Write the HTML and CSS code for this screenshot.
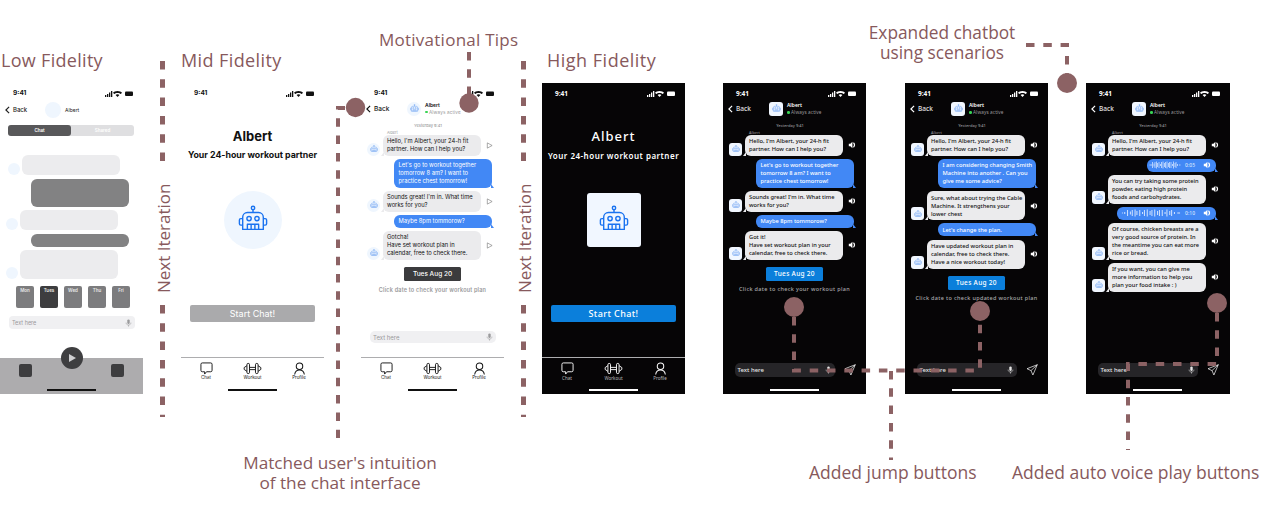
FILE: index.html
```html
<!DOCTYPE html>
<html lang="en">
<head>
<meta charset="utf-8">
<title>Albert chatbot design iterations</title>
<link rel="stylesheet" href="styles.css">
</head>
<body>
<svg class="defs" width="0" height="0" aria-hidden="true">
  <symbol id="robot" viewBox="0 0 32 32">
    <g fill="none" stroke="currentColor" stroke-width="1.5" stroke-linejoin="round">
      <circle cx="16" cy="3.2" r="1.8"/><path d="M16 5v3"/>
      <path d="M10 8h12a5 5 0 0 1 5 5v13H5V13a5 5 0 0 1 5-5z"/>
      <circle cx="11.8" cy="14.5" r="2.3"/><circle cx="20.2" cy="14.5" r="2.3"/>
      <path d="M10 26v-5.500h12V26M14 20.500V26M18 20.500V26"/>
      <path d="M5 14.500H3a1.500 1.500 0 0 0-1.500 1.500v4A1.500 1.500 0 0 0 3 21.500h2M27 14.500h2a1.500 1.500 0 0 1 1.500 1.500v4a1.500 1.500 0 0 1-1.500 1.500h-2"/>
    </g>
  </symbol>
  <symbol id="status" viewBox="0 0 28 7">
    <path fill="currentColor" d="M0 5h1.300v2H0zM2 4h1.300v3H2zM4 2.500h1.300V7H4zM6 1h1.300v6H6z"/>
    <path fill="currentColor" d="M12.500 1C14.500 1 16 1.800 17 2.800L15.800 4C15 3.300 14 2.900 12.500 2.900S10 3.300 9.200 4L8 2.800C9 1.800 10.500 1 12.500 1zM12.500 4.200c.8 0 1.400.3 1.900.7L12.500 7l-1.900-2.100c.5-.4 1.100-.7 1.900-.7z"/>
    <rect fill="currentColor" x="20" y="1.500" width="8" height="4.500" rx="1"/>
  </symbol>
  <symbol id="chat" viewBox="0 0 14 14">
    <path fill="none" stroke="currentColor" stroke-width="1" stroke-linejoin="round" d="M2.500 1h9A1.500 1.500 0 0 1 13 2.500v6.500A1.500 1.500 0 0 1 11.500 10.500H7L5 13V10.500H2.500A1.500 1.500 0 0 1 1 9V2.500A1.500 1.500 0 0 1 2.500 1z"/>
  </symbol>
  <symbol id="dumbbell" viewBox="0 0 20 14">
    <g fill="none" stroke="currentColor" stroke-width="1" stroke-linejoin="round">
      <rect x="4" y="1.500" width="2.800" height="11" rx="1.400"/><rect x="13.200" y="1.500" width="2.800" height="11" rx="1.400"/>
      <path d="M4 4 1 6v2l3 2M16 4l3 2v2l-3 2M6.800 5.800h6.400M6.800 8.200h6.400"/>
    </g>
  </symbol>
  <symbol id="person" viewBox="0 0 14 14">
    <g fill="none" stroke="currentColor" stroke-width="1.100">
      <circle cx="7" cy="4.500" r="3.500"/><path d="M1.800 13.500c.4-3 2-5 5.200-5s4.800 2 5.200 5"/>
    </g>
  </symbol>
  <symbol id="speaker" viewBox="0 0 10 10">
    <path fill="currentColor" d="M1 3.500h2L5.500 1v8L3 6.500H1z"/>
    <path fill="none" stroke="currentColor" stroke-width="1.400" d="M6.800 2.200c1.600 1.600 1.600 4 0 5.600"/>
  </symbol>
  <symbol id="play-outline" viewBox="0 0 8 8">
    <path fill="none" stroke="currentColor" stroke-width=".7" d="M1.500 1v6L7 4z"/>
  </symbol>
  <symbol id="mic" viewBox="0 0 8 10">
    <rect fill="currentColor" x="2.500" y=".5" width="3" height="5.800" rx="1.500"/>
    <path fill="none" stroke="currentColor" stroke-width=".7" d="M1 4.500c0 2 1.300 3 3 3s3-1 3-3M4 7.500v2"/>
  </symbol>
  <symbol id="send" viewBox="0 0 12 12">
    <path fill="none" stroke="currentColor" stroke-width=".7" stroke-linejoin="round" d="M11.300.7 1 4.700l4 1.900 1.900 4.400zM11.300.7 5 6.600"/>
  </symbol>
  <symbol id="chevron" viewBox="0 0 6 10">
    <path fill="none" stroke="currentColor" stroke-width="1.500" d="M5 1 1 5l4 4"/>
  </symbol>
  <symbol id="wave" viewBox="0 0 64 8" preserveAspectRatio="none">
    <path fill="none" stroke="currentColor" stroke-width="1" d="M1 4h1M4 3v2M7 1v6M10 2.500v3M12 1v6M15 .5v7M17 2v4M20 1v6M23 3v2M25 1v6M28 .5v7M31 2v4M33 1v6M36 .5v7M39 2v4M41 1v6M44 1v6M47 3v2M49 .5v7M52 2v4M54 1v6M57 3v2M60 4h3"/>
  </symbol>
</svg>

<main class="canvas">
  <h2 class="note note-low">Low Fidelity</h2>
  <h2 class="note note-mid">Mid Fidelity</h2>
  <h2 class="note note-high">High Fidelity</h2>
  <p class="note note-tips">Motivational Tips</p>
  <p class="note note-expanded">Expanded chatbot<br>using scenarios</p>
  <p class="note note-matched">Matched user's intuition<br>of the chat interface</p>
  <p class="note note-jump">Added jump buttons</p>
  <p class="note note-voice">Added auto voice play buttons</p>

  <!-- Low fidelity -->
  <section class="phone light p-low">
    <div class="status"><span>9:41</span><svg class="status-icons"><use href="#status"/></svg></div>
    <div class="low-header">
      <svg class="chevron"><use href="#chevron"/></svg><span class="back-label">Back</span>
      <span class="low-avatar"></span><span class="low-name">Albert</span>
    </div>
    <div class="segment"><span class="segment-on">Chat</span><span class="segment-off">Shared</span></div>
    <div class="low-msgs">
      <div class="low-row low-row-a"><span class="low-dot"></span><span class="low-bubble low-grey h20"></span></div>
      <div class="low-row low-row-user"><span class="low-bubble low-dark h28"></span></div>
      <div class="low-row low-row-b"><span class="low-dot"></span><span class="low-bubble low-grey h20"></span></div>
      <div class="low-row low-row-user"><span class="low-bubble low-dark h13"></span></div>
      <div class="low-row low-row-b"><span class="low-dot"></span><span class="low-bubble low-grey h29"></span></div>
    </div>
    <div class="days">
      <span class="day">Mon</span><span class="day day-on">Tues</span><span class="day">Wed</span><span class="day">Thu</span><span class="day">Fri</span>
    </div>
    <div class="low-input"><span>Text here</span><svg class="mic"><use href="#mic"/></svg></div>
    <div class="low-bar">
      <span class="low-square"></span>
      <span class="low-play"><span class="low-play-arrow"></span></span>
      <span class="low-square"></span>
    </div>
    <span class="home"></span>
  </section>

  <!-- Mid fidelity welcome -->
  <section class="phone light p-mid">
    <div class="status"><span>9:41</span><svg class="status-icons"><use href="#status"/></svg></div>
    <div class="welcome">
      <h3 class="welcome-title">Albert</h3>
      <p class="welcome-sub">Your 24-hour workout partner</p>
      <div class="welcome-circle"><svg class="robot-big"><use href="#robot"/></svg></div>
      <div class="start start-grey">Start Chat!</div>
    </div>
    <nav class="tabs">
      <div class="tab"><svg class="tab-icon"><use href="#chat"/></svg><span>Chat</span></div>
      <div class="tab"><svg class="tab-icon tab-wide"><use href="#dumbbell"/></svg><span>Workout</span></div>
      <div class="tab"><svg class="tab-icon"><use href="#person"/></svg><span>Profile</span></div>
    </nav>
    <span class="home"></span>
  </section>

  <!-- Mid fidelity chat -->
  <section class="phone light p-midchat">
    <div class="status"><span>9:41</span><svg class="status-icons"><use href="#status"/></svg></div>
    <header class="chat-head">
      <svg class="chevron"><use href="#chevron"/></svg><span class="back-label">Back</span>
      <span class="head-avatar round"><svg><use href="#robot"/></svg></span>
      <div class="head-text"><strong>Albert</strong><span><i class="online"></i>Always active</span></div>
    </header>
    <div class="stamp">Yesterday 9:41</div>
    <div class="sender">Albert</div>
    <div class="msgs">
      <div class="row"><span class="avatar round"><svg><use href="#robot"/></svg></span><p class="bubble bot">Hello, I'm Albert, your 24-h fit<br>partner. How can I help you?</p><svg class="play"><use href="#play-outline"/></svg></div>
      <p class="bubble user">Let's go to workout together<br>tomorrow 8 am? I want to<br>practice chest tomorrow!</p>
      <div class="row"><span class="avatar round"><svg><use href="#robot"/></svg></span><p class="bubble bot">Sounds great! I'm in. What time<br>works for you?</p><svg class="play"><use href="#play-outline"/></svg></div>
      <p class="bubble user">Maybe 8pm tommorow?</p>
      <div class="row"><span class="avatar round"><svg><use href="#robot"/></svg></span><p class="bubble bot">Gotcha!<br>Have set workout plan in<br>calendar, free to check there.</p><svg class="play"><use href="#play-outline"/></svg></div>
    </div>
    <div class="date date-dark">Tues Aug 20</div>
    <p class="hint">Click date to check your workout plan</p>
    <div class="input input-light"><span>Text here</span><svg class="mic"><use href="#mic"/></svg></div>
    <nav class="tabs">
      <div class="tab"><svg class="tab-icon"><use href="#chat"/></svg><span>Chat</span></div>
      <div class="tab"><svg class="tab-icon tab-wide"><use href="#dumbbell"/></svg><span>Workout</span></div>
      <div class="tab"><svg class="tab-icon"><use href="#person"/></svg><span>Profile</span></div>
    </nav>
    <span class="home"></span>
  </section>

  <!-- High fidelity welcome -->
  <section class="phone dark p-high">
    <div class="status"><span>9:41</span><svg class="status-icons"><use href="#status"/></svg></div>
    <div class="welcome">
      <h3 class="welcome-title">Albert</h3>
      <p class="welcome-sub">Your 24-hour workout partner</p>
      <div class="welcome-square"><svg class="robot-big"><use href="#robot"/></svg></div>
      <div class="start start-blue">Start Chat!</div>
    </div>
    <nav class="tabs">
      <div class="tab"><svg class="tab-icon"><use href="#chat"/></svg><span>Chat</span></div>
      <div class="tab"><svg class="tab-icon tab-wide"><use href="#dumbbell"/></svg><span>Workout</span></div>
      <div class="tab"><svg class="tab-icon"><use href="#person"/></svg><span>Profile</span></div>
    </nav>
    <span class="home"></span>
  </section>

  <!-- High fidelity chat 1 -->
  <section class="phone dark p-chat1">
    <div class="status"><span>9:41</span><svg class="status-icons"><use href="#status"/></svg></div>
    <header class="chat-head">
      <svg class="chevron"><use href="#chevron"/></svg><span class="back-label">Back</span>
      <span class="head-avatar"><svg><use href="#robot"/></svg></span>
      <div class="head-text"><strong>Albert</strong><span><i class="online"></i>Always active</span></div>
    </header>
    <div class="stamp">Yesterday 9:41</div>
    <div class="sender">Albert</div>
    <div class="msgs">
      <div class="row"><span class="avatar"><svg><use href="#robot"/></svg></span><p class="bubble bot">Hello, I'm Albert, your 24-h fit<br>partner. How can I help you?</p><svg class="speaker"><use href="#speaker"/></svg></div>
      <p class="bubble user">Let's go to workout together<br>tomorrow 8 am? I want to<br>practice chest tomorrow!</p>
      <div class="row"><span class="avatar"><svg><use href="#robot"/></svg></span><p class="bubble bot">Sounds great! I'm in. What time<br>works for you?</p><svg class="speaker"><use href="#speaker"/></svg></div>
      <p class="bubble user">Maybe 8pm tommorow?</p>
      <div class="row"><span class="avatar"><svg><use href="#robot"/></svg></span><p class="bubble bot">Got it!<br>Have set workout plan in your<br>calendar, free to check there.</p><svg class="speaker"><use href="#speaker"/></svg></div>
    </div>
    <div class="date date-blue">Tues Aug 20</div>
    <p class="hint">Click date to check your workout plan</p>
    <div class="compose"><div class="input input-dark"><span>Text here</span><svg class="mic"><use href="#mic"/></svg></div><svg class="send"><use href="#send"/></svg></div>
    <span class="home"></span>
  </section>

  <!-- High fidelity chat 2 -->
  <section class="phone dark p-chat2">
    <div class="status"><span>9:41</span><svg class="status-icons"><use href="#status"/></svg></div>
    <header class="chat-head">
      <svg class="chevron"><use href="#chevron"/></svg><span class="back-label">Back</span>
      <span class="head-avatar"><svg><use href="#robot"/></svg></span>
      <div class="head-text"><strong>Albert</strong><span><i class="online"></i>Always active</span></div>
    </header>
    <div class="stamp">Yesterday 9:41</div>
    <div class="sender">Albert</div>
    <div class="msgs msgs-wide">
      <div class="row"><span class="avatar"><svg><use href="#robot"/></svg></span><p class="bubble bot">Hello, I'm Albert, your 24-h fit<br>partner. How can I help you?</p><svg class="speaker"><use href="#speaker"/></svg></div>
      <p class="bubble user">I am considering changing Smith<br>Machine into another . Can you<br>give me some advice?</p>
      <div class="row"><span class="avatar"><svg><use href="#robot"/></svg></span><p class="bubble bot">Sure, what about trying the Cable<br>Machine. It strengthens your<br>lower chest</p><svg class="speaker"><use href="#speaker"/></svg></div>
      <p class="bubble user">Let's change the plan.</p>
      <div class="row"><span class="avatar"><svg><use href="#robot"/></svg></span><p class="bubble bot">Have updated workout plan in<br>calendar, free to check there.<br>Have a nice workout today!</p><svg class="speaker"><use href="#speaker"/></svg></div>
    </div>
    <div class="date date-blue">Tues Aug 20</div>
    <p class="hint">Click date to check updated workout plan</p>
    <div class="compose"><div class="input input-dark"><span>Text here</span><svg class="mic"><use href="#mic"/></svg></div><svg class="send"><use href="#send"/></svg></div>
    <span class="home"></span>
  </section>

  <!-- High fidelity chat 3 -->
  <section class="phone dark p-chat3">
    <div class="status"><span>9:41</span><svg class="status-icons"><use href="#status"/></svg></div>
    <header class="chat-head">
      <svg class="chevron"><use href="#chevron"/></svg><span class="back-label">Back</span>
      <span class="head-avatar"><svg><use href="#robot"/></svg></span>
      <div class="head-text"><strong>Albert</strong><span><i class="online"></i>Always active</span></div>
    </header>
    <div class="stamp">Yesterday 9:41</div>
    <div class="sender">Albert</div>
    <div class="msgs">
      <div class="row"><span class="avatar"><svg><use href="#robot"/></svg></span><p class="bubble bot">Hello, I'm Albert, your 24-h fit<br>partner. How can I help you?</p><svg class="speaker"><use href="#speaker"/></svg></div>
      <div class="bubble user voice voice-short"><svg class="wave wave-short"><use href="#wave"/></svg><span>0:05</span><svg class="voice-speaker"><use href="#speaker"/></svg></div>
      <div class="row"><span class="avatar"><svg><use href="#robot"/></svg></span><p class="bubble bot">You can try taking some protein<br>powder, eating high protein<br>foods and carbohydrates.</p><svg class="speaker"><use href="#speaker"/></svg></div>
      <div class="bubble user voice"><svg class="wave"><use href="#wave"/></svg><span>0:10</span><svg class="voice-speaker"><use href="#speaker"/></svg></div>
      <div class="row"><span class="avatar"><svg><use href="#robot"/></svg></span><p class="bubble bot">Of course, chicken breasts are a<br>very good source of protein. In<br>the meantime you can eat more<br>rice or bread.</p><svg class="speaker"><use href="#speaker"/></svg></div>
      <div class="row"><span class="avatar"><svg><use href="#robot"/></svg></span><p class="bubble bot">If you want, you can give me<br>more information to help you<br>plan your food intake : )</p><svg class="speaker"><use href="#speaker"/></svg></div>
    </div>
    <div class="compose"><div class="input input-dark"><span>Text here</span><svg class="mic"><use href="#mic"/></svg></div><svg class="send"><use href="#send"/></svg></div>
    <span class="home"></span>
  </section>

  <!-- Annotation overlay -->
  <svg class="overlay" width="1280" height="512" viewBox="0 0 1280 512" aria-hidden="true">
    <g class="dash-fat">
      <path d="M162.500 61V170M162.500 305V417"/>
      <path d="M523.500 61V170M523.500 305V417"/>
    </g>
    <g class="dash">
      <path d="M345 108H338V438"/>
      <path d="M469 52V95"/>
      <path d="M1026 45H1067V75"/>
      <path d="M794 317V370.500H980V320"/>
      <path d="M891 371V460"/>
      <path d="M1217 313V364H1128V450"/>
    </g>
    <g class="dots">
      <circle cx="355.500" cy="107.500" r="9.700"/>
      <circle cx="469" cy="103" r="9.700"/>
      <circle cx="1067" cy="83" r="10"/>
      <circle cx="794" cy="307" r="10"/>
      <circle cx="980" cy="311" r="10"/>
      <circle cx="1217" cy="303" r="10"/>
    </g>
  </svg>
  <span class="note iter iter-1">Next Iteration</span>
  <span class="note iter iter-2">Next Iteration</span>
</main>
</body>
</html>
```
FILE: styles.css
```css
* { box-sizing: border-box; margin: 0; padding: 0; }
html, body { background: #fff; }
body { width: 1280px; height: 512px; overflow: hidden; font-family: "Noto Sans", sans-serif; }
.defs { position: absolute; }
.canvas { position: relative; width: 1280px; height: 512px; overflow: hidden; }

/* Annotations */
.note { position: absolute; font-family: "Open Sans", "Noto Sans", sans-serif; font-weight: 400; font-size: 18px; line-height: 20px; color: #87595c; white-space: nowrap; z-index: 3; }
.note-low { left: 1px; top: 50px; letter-spacing: .3px; }
.note-mid { left: 181px; top: 50px; letter-spacing: .4px; }
.note-high { left: 547px; top: 50px; letter-spacing: .5px; }
.note-tips { left: 379px; top: 30px; font-size: 17px; letter-spacing: .25px; }
.note-expanded { left: 864px; top: 23px; width: 156px; text-align: center; font-size: 17.300px; }
.note-matched { left: 242px; top: 453px; width: 196px; text-align: center; font-size: 17.200px; }
.note-jump { left: 809px; top: 462px; font-size: 17.500px; }
.note-voice { left: 1012px; top: 462px; font-size: 17.500px; }
.iter { writing-mode: vertical-rl; transform: rotate(180deg); font-size: 17px; line-height: 20px; top: 183px; height: 110px; background: #fff; }
.iter-1 { left: 154px; }
.iter-2 { left: 515px; }
.overlay { position: absolute; left: 0; top: 0; z-index: 2; pointer-events: none; }
.dash-fat path { fill: none; stroke: #8c6264; stroke-width: 5; stroke-dasharray: 8.500 9.800; }
.dash path { fill: none; stroke: #8c6264; stroke-width: 4; stroke-dasharray: 8.500 8.800; }
.dots circle { fill: #8c6264; }

/* Phone frame */
.phone { position: absolute; top: 83px; width: 143px; height: 311px; display: flex; flex-direction: column; overflow: hidden; }
.p-low { left: 0; }
.p-mid { left: 181px; }
.p-midchat { left: 361px; }
.p-high { left: 542px; }
.p-chat1 { left: 723px; }
.p-chat2 { left: 905px; }
.p-chat3 { left: 1086px; width: 144px; }
.light { background: #fff; color: #111; --home: #111; --tabline: #adadaf; font-family: Inter, "Noto Sans", sans-serif; }
.dark { background: #060506; color: #fff; --home: #fff; --tabline: #adadaf; }
.status { flex: none; height: 20px; padding: 0 10px 0 13px; display: flex; align-items: center; justify-content: space-between; font-size: 6.500px; font-weight: 700; }
.status-icons { width: 28px; height: 7px; }
.home { position: absolute; left: 47px; bottom: 3.500px; width: 49px; height: 1.500px; background: var(--home); }

/* Low fidelity */
.low-header { flex: none; height: 13px; margin-left: 5px; display: flex; align-items: center; font-size: 5.500px; color: #222; }
.chevron { width: 5px; height: 8px; flex: none; }
.back-label { margin-left: 3px; width: 17px; font-size: 6px; font-weight: 500; }
.low-avatar { width: 16px; height: 16px; border-radius: 50%; background: #eff6fe; margin-left: 15px; flex: none; }
.low-name { margin-left: 4px; font-size: 5px; }
.segment { flex: none; display: flex; height: 11px; margin: 9px 9px 0 8px; border-radius: 3px; background: #dfdfe1; color: #fff; font-size: 4.500px; font-weight: 600; text-align: center; line-height: 11px; }
.segment-on { flex: 63; background: #58585a; border-radius: 3px; }
.segment-off { flex: 63; }
.low-msgs { flex: none; display: flex; flex-direction: column; gap: 3.600px; margin-top: 19px; }
.low-row { display: flex; align-items: flex-end; gap: 2px; }
.low-row-a { padding-left: 8px; }
.low-row-b { padding-left: 6px; }
.low-row-user { justify-content: flex-end; padding-right: 14px; }
.low-dot { width: 12px; height: 12px; border-radius: 50%; background: #eff6fe; flex: none; }
.low-bubble { display: block; width: 98px; border-radius: 6px; }
.low-grey { background: #ececee; }
.low-dark { background: #828283; }
.h20 { height: 20px; }
.h28 { height: 28px; }
.h13 { height: 13px; }
.h29 { height: 29px; }
.days { flex: none; display: flex; gap: 6px; margin: 7px 0 0 16px; }
.day { width: 18px; height: 22px; border-radius: 2px; background: #7c7c7e; color: #e8e8e8; font-size: 4.500px; font-weight: 600; text-align: center; padding-top: 2px; }
.day-on { background: #3d3d3f; }
.low-input { flex: none; display: flex; align-items: center; justify-content: space-between; height: 12.500px; margin: 8px 8px 0 9px; padding: 0 3px; border-radius: 4px; background: #f0f0f2; color: #9a9a9c; font-size: 5.500px; }
.mic { width: 7px; height: 8px; flex: none; color: #9a9a9c; }
.low-bar { position: relative; margin-top: auto; flex: none; height: 36px; background: #adacae; display: flex; justify-content: space-between; padding: 6px 19px 0; }
.low-square { width: 13px; height: 12.500px; border-radius: 2px; background: #3d3d3f; }
.low-play { position: absolute; left: 60.500px; top: -11px; width: 22px; height: 22px; border-radius: 50%; background: #3e3e40; display: flex; align-items: center; justify-content: center; }
.low-play-arrow { width: 0; height: 0; border-style: solid; border-width: 4px 0 4px 7px; border-color: transparent transparent transparent #cfcfd1; margin-left: 1px; }

/* Welcome */
.welcome { flex: 1; display: flex; flex-direction: column; align-items: center; min-height: 0; }
.welcome-title { font-size: 13px; line-height: 16px; font-weight: 700; margin-top: 25px; }
.welcome-sub { font-size: 8.800px; line-height: 11px; font-weight: 700; margin-top: 5px; white-space: nowrap; }
.welcome-circle { width: 58px; height: 58px; border-radius: 50%; background: #eff6fe; margin-top: 31px; display: flex; align-items: center; justify-content: center; color: #1a73f0; }
.welcome-square { width: 54px; height: 54px; border-radius: 3px; background: #f1f7ff; margin-top: 32px; display: flex; align-items: center; justify-content: center; color: #1a73f0; }
.robot-big { width: 30px; height: 30px; }
.start { width: 125px; height: 17px; border-radius: 2px; color: #fff; font-size: 9px; line-height: 17px; text-align: center; }
.start-grey { background: #aaaaac; margin-top: 56px; }
.start-blue { background: #0b7fdb; margin-top: 58px; font-weight: 500; letter-spacing: .4px; }
.dark .welcome-title { font-weight: 500; letter-spacing: 1px; }
.dark .welcome-sub { font-weight: 600; letter-spacing: .5px; margin-top: 6px; font-size: 8px; }
.tabs { flex: none; margin-top: auto; height: 37px; border-top: 1.500px solid var(--tabline); display: flex; justify-content: space-between; padding: 4px 13px 0; }
.tab { width: 24px; display: flex; flex-direction: column; align-items: center; font-size: 4.500px; line-height: 6px; }
.dark .tab span { color: #b9b9bb; }
.tab-icon { width: 13px; height: 13px; }
.tab-wide { width: 19px; }

/* Chat */
.chat-head { flex: none; display: flex; align-items: center; height: 13px; margin-top: -1px; padding-left: 5px; font-size: 6px; }
.chat-head .back-label { width: 22px; font-size: 6.500px; font-weight: 500; }
.dark .chat-head .back-label { color: #e2e2e2; }
.head-avatar { width: 14px; height: 14px; border-radius: 3px; background: #f1f7ff; margin-left: 11px; flex: none; display: flex; align-items: center; justify-content: center; color: #4e8ff0; }
.head-avatar svg { width: 9px; height: 9px; }
.head-avatar.round { border-radius: 50%; background: #eff6fe; }
.head-text { margin-left: 4px; display: flex; flex-direction: column; line-height: 7px; font-size: 4.700px; }
.head-text strong { font-weight: 600; font-size: 5px; }
.head-text span { color: #9a9a9c; letter-spacing: .1px; }
.online { display: inline-block; width: 2.500px; height: 2.500px; border-radius: 50%; background: #39d353; margin-right: 1.500px; vertical-align: middle; }
.stamp { flex: none; margin: 8px 0 0 47px; width: 40px; text-align: center; font-size: 4px; line-height: 6px; font-weight: 500; color: #9a9a9c; white-space: nowrap; }
.sender { flex: none; margin: 1px 0 0 26px; font-size: 3.800px; line-height: 5px; color: #9a9a9c; }
.msgs { flex: none; display: flex; flex-direction: column; gap: 3px; margin-top: -.500px; }
.msgs-wide { gap: 3.300px; }
.row { display: flex; align-items: flex-end; padding-left: 6px; }
.avatar { width: 13px; height: 13px; border-radius: 3px; background: #f1f7ff; flex: none; display: flex; align-items: center; justify-content: center; color: #4e8ff0; }
.avatar svg { width: 8px; height: 8px; }
.avatar.round { border-radius: 50%; background: #eff6fe; }
.bubble { position: relative; width: 98px; padding: 2.500px 4.500px; font-size: 5.700px; line-height: 8px; font-weight: 500; border-radius: 6px; white-space: nowrap; flex: none; }
.light .bubble { font-size: 5.800px; font-weight: 400; }
.bot { background: #ebebed; color: #111; margin-left: 2.500px; }
.bot::after { content: ""; position: absolute; left: -2px; bottom: 0; border-top: 4px solid transparent; border-right: 3px solid #ebebed; }
.user { background: #4288f5; color: #fff; align-self: flex-end; margin-right: 12px; }
.user::after { content: ""; position: absolute; right: -2px; bottom: 0; border-top: 4px solid transparent; border-left: 3px solid #4288f5; }
.speaker { width: 8px; height: 8px; flex: none; align-self: center; margin-left: 5.500px; color: #fff; }
.play { width: 7px; height: 7px; flex: none; align-self: center; margin-left: 5px; color: #777; }
.date { flex: none; align-self: center; width: 57px; height: 14px; margin-top: 7px; color: #fff; font-size: 6.500px; line-height: 14px; text-align: center; border-radius: 1.500px; font-weight: 500; }
.date-blue { background: #0b7fdb; letter-spacing: .3px; }
.date-dark { background: #3b3b3d; }
.hint { flex: none; text-align: center; margin-top: 4px; font-size: 5.500px; line-height: 8px; letter-spacing: .33px; color: #a9a9ab; white-space: nowrap; font-weight: 500; }
.light .hint { color: #9a9a9c; font-weight: 600; letter-spacing: .2px; margin-top: 5px; }
.input { display: flex; align-items: center; justify-content: space-between; border-radius: 5px; padding: 0 3px; font-size: 6px; flex: none; }
.input-light { width: 126px; height: 12px; margin: auto 0 14px 9px; background: #f0f0f2; color: #9a9a9c; }
.input-light + .tabs { margin-top: 0; }
.input-dark { width: 100px; height: 14px; background: #262528; color: #e5e5e5; font-weight: 500; }
.input-dark .mic { color: #e5e5e5; }
.compose { flex: none; display: flex; align-items: center; gap: 9px; margin: auto 0 17px 11.500px; }
.send { width: 12px; height: 12px; color: #fff; flex: none; }
.voice { display: flex; align-items: center; gap: 4px; padding: 0 5px 0 4.500px; height: 13px; justify-content: flex-end; width: 99px; margin-right: 14px; font-size: 5px; color: #cfe1fd; }
.voice-short { width: 69px; }
.wave { width: 60px; height: 8px; flex: none; color: #d7e6ff; }
.wave-short { width: 32px; }
.voice-speaker { width: 8px; height: 8px; flex: none; color: #fff; margin-left: 4px; }
```
